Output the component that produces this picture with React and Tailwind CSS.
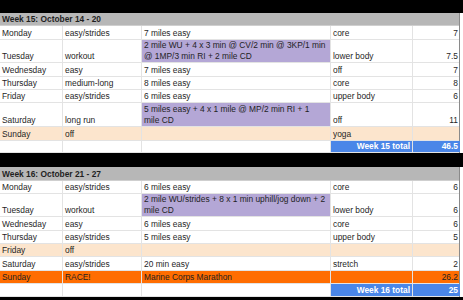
import React from "react";

const week15 = [
  { h: "h-[14px]", c: ["Monday", "easy/strides", "7 miles easy", "core", "7"] },
  { h: "h-[23px]", purple: true, c: ["Tuesday", "workout", ["2 mile WU + 4 x 3 min @ CV/2 min @ 3KP/1 min", "@ 1MP/3 min RI + 2 mile CD"], "lower body", "7.5"] },
  { h: "h-[14px]", c: ["Wednesday", "easy", "7 miles easy", "off", "7"] },
  { h: "h-[13px]", c: ["Thursday", "medium-long", "8 miles easy", "core", "8"] },
  { h: "h-[13px]", c: ["Friday", "easy/strides", "6 miles easy", "upper body", "6"] },
  { h: "h-[24px]", purple: true, c: ["Saturday", "long run", ["5 miles easy + 4 x 1 mile @ MP/2 min RI + 1", "mile CD"], "off", "11"] },
  { h: "h-[14px]", bg: "bg-[#fce5cd]", c: ["Sunday", "off", "", "yoga", ""] },
];

const week16 = [
  { h: "h-[13px]", c: ["Monday", "easy/strides", "6 miles easy", "core", "6"] },
  { h: "h-[23px]", purple: true, c: ["Tuesday", "workout", ["2 mile WU/strides + 8 x 1 min uphill/jog down + 2", "mile CD"], "lower body", "6"] },
  { h: "h-[14px]", c: ["Wednesday", "easy", "6 miles easy", "core", "6"] },
  { h: "h-[13px]", c: ["Thursday", "easy/strides", "5 miles easy", "upper body", "5"] },
  { h: "h-[13px]", bg: "bg-[#fce5cd]", c: ["Friday", "off", "", "", ""] },
  { h: "h-[14px]", c: ["Saturday", "easy/strides", "20 min easy", "stretch", "2"] },
  { h: "h-[13px]", bg: "bg-[#ff6d01]", c: ["Sunday", "RACE!", "Marine Corps Marathon", "", "26.2"] },
];

const GRID = "grid grid-cols-[63px_79px_189px_82px_47px]";

function Cell({ children, right, extra = "", last }) {
  return (
    <div
      className={`flex items-end px-[2px] pb-[0.5px] leading-[10.6px] overflow-hidden whitespace-nowrap ${
        right ? "justify-end text-right" : ""
      } ${last ? "" : "border-r border-[#e3e3e3]"} ${extra}`}
    >
      {children}
    </div>
  );
}

function Row({ row }) {
  const [a, b, c, d, e] = row.c;
  return (
    <div className={`${GRID} ${row.h} ${row.bg || "bg-white"} border-b border-[#e3e3e3]`}>
      <Cell>{a}</Cell>
      <Cell>{b}</Cell>
      <Cell extra={row.purple ? "bg-[#b4a7d6]" : ""}>
        {Array.isArray(c) ? (
          <div className="flex flex-col">
            <span>{c[0]}</span>
            <span>{c[1]}</span>
          </div>
        ) : (
          c
        )}
      </Cell>
      <Cell>{d}</Cell>
      <Cell right last>
        {e}
      </Cell>
    </div>
  );
}

function TotalRow({ label, total, h }) {
  return (
    <div className={`${GRID} ${h} bg-white border-b border-[#e3e3e3]`}>
      <Cell />
      <Cell />
      <Cell />
      <Cell right extra="bg-[#4a86e8] text-white font-bold">
        {label}
      </Cell>
      <Cell right last extra="bg-[#4a86e8] text-white font-bold">
        {total}
      </Cell>
    </div>
  );
}

function Header({ text, h }) {
  return (
    <div className={`${h} bg-[#b7b7b7] flex items-end px-[2px] pb-[0.5px] leading-[10.6px] font-bold border-b border-[#cfcfcf]`}>
      {text}
    </div>
  );
}

export default function App() {
  return (
    <div
      className="w-[463px] h-[300px] overflow-hidden bg-white text-[8.4px] text-[#1f1f1f]"
      style={{ fontFamily: '"Liberation Sans", Arial, sans-serif' }}
    >
      <div className="h-[13px] bg-black" />
      <div className="flex">
        <div className="w-[460px] border-r border-[#8a8a8a]">
          <Header text="Week 15: October 14 - 20" h="h-[13px]" />
          {week15.map((r, i) => (
            <Row key={i} row={r} />
          ))}
          <TotalRow label="Week 15 total" total="46.5" h="h-[12px]" />
        </div>
      </div>
      <div className="h-[14px] bg-black" />
      <div className="flex">
        <div className="w-[460px] border-r border-[#8a8a8a]">
          <Header text="Week 16: October 21 - 27" h="h-[14px]" />
          {week16.map((r, i) => (
            <Row key={i} row={r} />
          ))}
          <TotalRow label="Week 16 total" total="25" h="h-[13px]" />
        </div>
      </div>
      <div className="h-[14px] bg-black" />
    </div>
  );
}
